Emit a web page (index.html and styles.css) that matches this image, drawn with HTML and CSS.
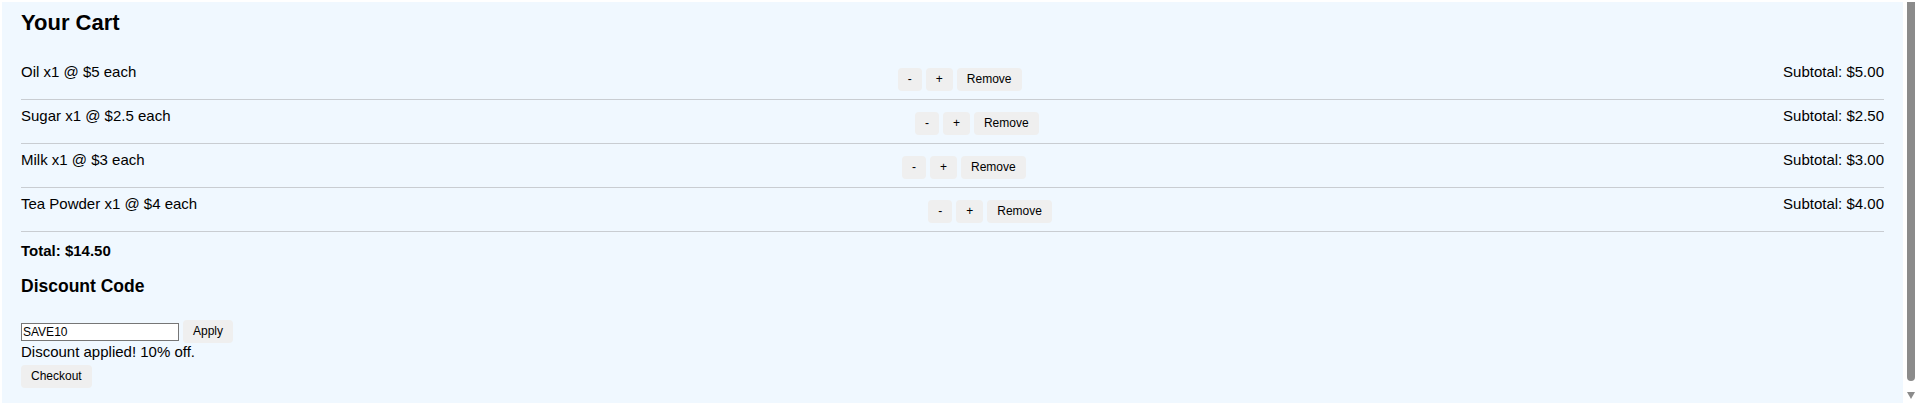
FILE: index.html
```html
<!DOCTYPE html>
<html lang="en">
<head>
<meta charset="utf-8">
<title>Your Cart</title>
<link rel="stylesheet" href="styles.css">
</head>
<body>
<div class="cart">
  <h2 class="cart-title">Your Cart</h2>
  <div class="cart-list">
    <div class="cart-item">
      <span class="item-name">Oil x1 @ $5 each</span>
      <div class="item-actions">
        <button class="btn">-</button>
        <button class="btn">+</button>
        <button class="btn">Remove</button>
      </div>
      <span class="item-subtotal">Subtotal: $5.00</span>
    </div>
    <div class="cart-item">
      <span class="item-name">Sugar x1 @ $2.5 each</span>
      <div class="item-actions">
        <button class="btn">-</button>
        <button class="btn">+</button>
        <button class="btn">Remove</button>
      </div>
      <span class="item-subtotal">Subtotal: $2.50</span>
    </div>
    <div class="cart-item">
      <span class="item-name">Milk x1 @ $3 each</span>
      <div class="item-actions">
        <button class="btn">-</button>
        <button class="btn">+</button>
        <button class="btn">Remove</button>
      </div>
      <span class="item-subtotal">Subtotal: $3.00</span>
    </div>
    <div class="cart-item">
      <span class="item-name">Tea Powder x1 @ $4 each</span>
      <div class="item-actions">
        <button class="btn">-</button>
        <button class="btn">+</button>
        <button class="btn">Remove</button>
      </div>
      <span class="item-subtotal">Subtotal: $4.00</span>
    </div>
  </div>
  <p class="cart-total">Total: $14.50</p>
  <h3 class="discount-title">Discount Code</h3>
  <div class="discount-form">
    <input class="discount-input" type="text" value="SAVE10">
    <button class="btn">Apply</button>
  </div>
  <p class="discount-msg">Discount applied! 10% off.</p>
  <button class="btn checkout-btn">Checkout</button>
</div>
<div class="scrollbar" aria-hidden="true">
  <div class="scrollbar-thumb"></div>
  <div class="scrollbar-arrow"></div>
</div>
</body>
</html>
```

FILE: styles.css
```css
html {
  background: #ffffff;
}

body {
  margin: 0 14px 0 0;
  font-family: "Liberation Sans", Arial, sans-serif;
  font-size: 15px;
  color: #000;
}

.cart {
  margin: 2px 0 0 2px;
  padding: 8px 19px 15px;
  background: #f0f8ff;
}

.cart-title {
  margin: 0;
  font-size: 22px;
  font-weight: bold;
  line-height: 25px;
}

.cart-list {
  margin-top: 21px;
}

.cart-item {
  display: flex;
  justify-content: space-between;
  align-items: flex-start;
  padding: 7px 0 8px;
  border-bottom: 1px solid #c9cdd2;
  line-height: 17px;
}

.item-actions {
  display: flex;
  gap: 4px;
  margin-top: 5px;
}

.btn {
  font-family: "Liberation Sans", Arial, sans-serif;
  font-size: 12px;
  line-height: 15px;
  padding: 4px 10px;
  border: none;
  border-radius: 4px;
  background: #efefef;
  color: #000;
  margin: 0;
}

.cart-total {
  margin: 10px 0 0;
  font-weight: bold;
  line-height: 17px;
}

.discount-title {
  margin: 17px 0 0;
  font-size: 17.5px;
  line-height: 20px;
}

.discount-form {
  display: flex;
  align-items: center;
  gap: 4px;
  margin-top: 24px;
}

.discount-input {
  box-sizing: border-box;
  width: 158px;
  height: 18px;
  margin: 0;
  padding: 1px 1px;
  border: 1px solid #767676;
  background: #fff;
  font-family: "Liberation Sans", Arial, sans-serif;
  font-size: 12px;
  color: #000;
}

.discount-msg {
  margin: 0;
  line-height: 17px;
}

.checkout-btn {
  display: block;
  margin-top: 5px;
}

.scrollbar {
  position: fixed;
  top: 0;
  right: 0;
  bottom: 0;
  width: 14px;
  background: #ffffff;
}

.scrollbar-thumb {
  position: absolute;
  top: 2px;
  left: 4px;
  width: 8px;
  height: 379px;
  background: #8b8b8b;
  border-radius: 0 0 4px 4px;
}

.scrollbar-arrow {
  position: absolute;
  top: 392px;
  left: 4px;
  width: 0;
  height: 0;
  border-left: 4px solid transparent;
  border-right: 4px solid transparent;
  border-top: 7px solid #8b8b8b;
}
```
